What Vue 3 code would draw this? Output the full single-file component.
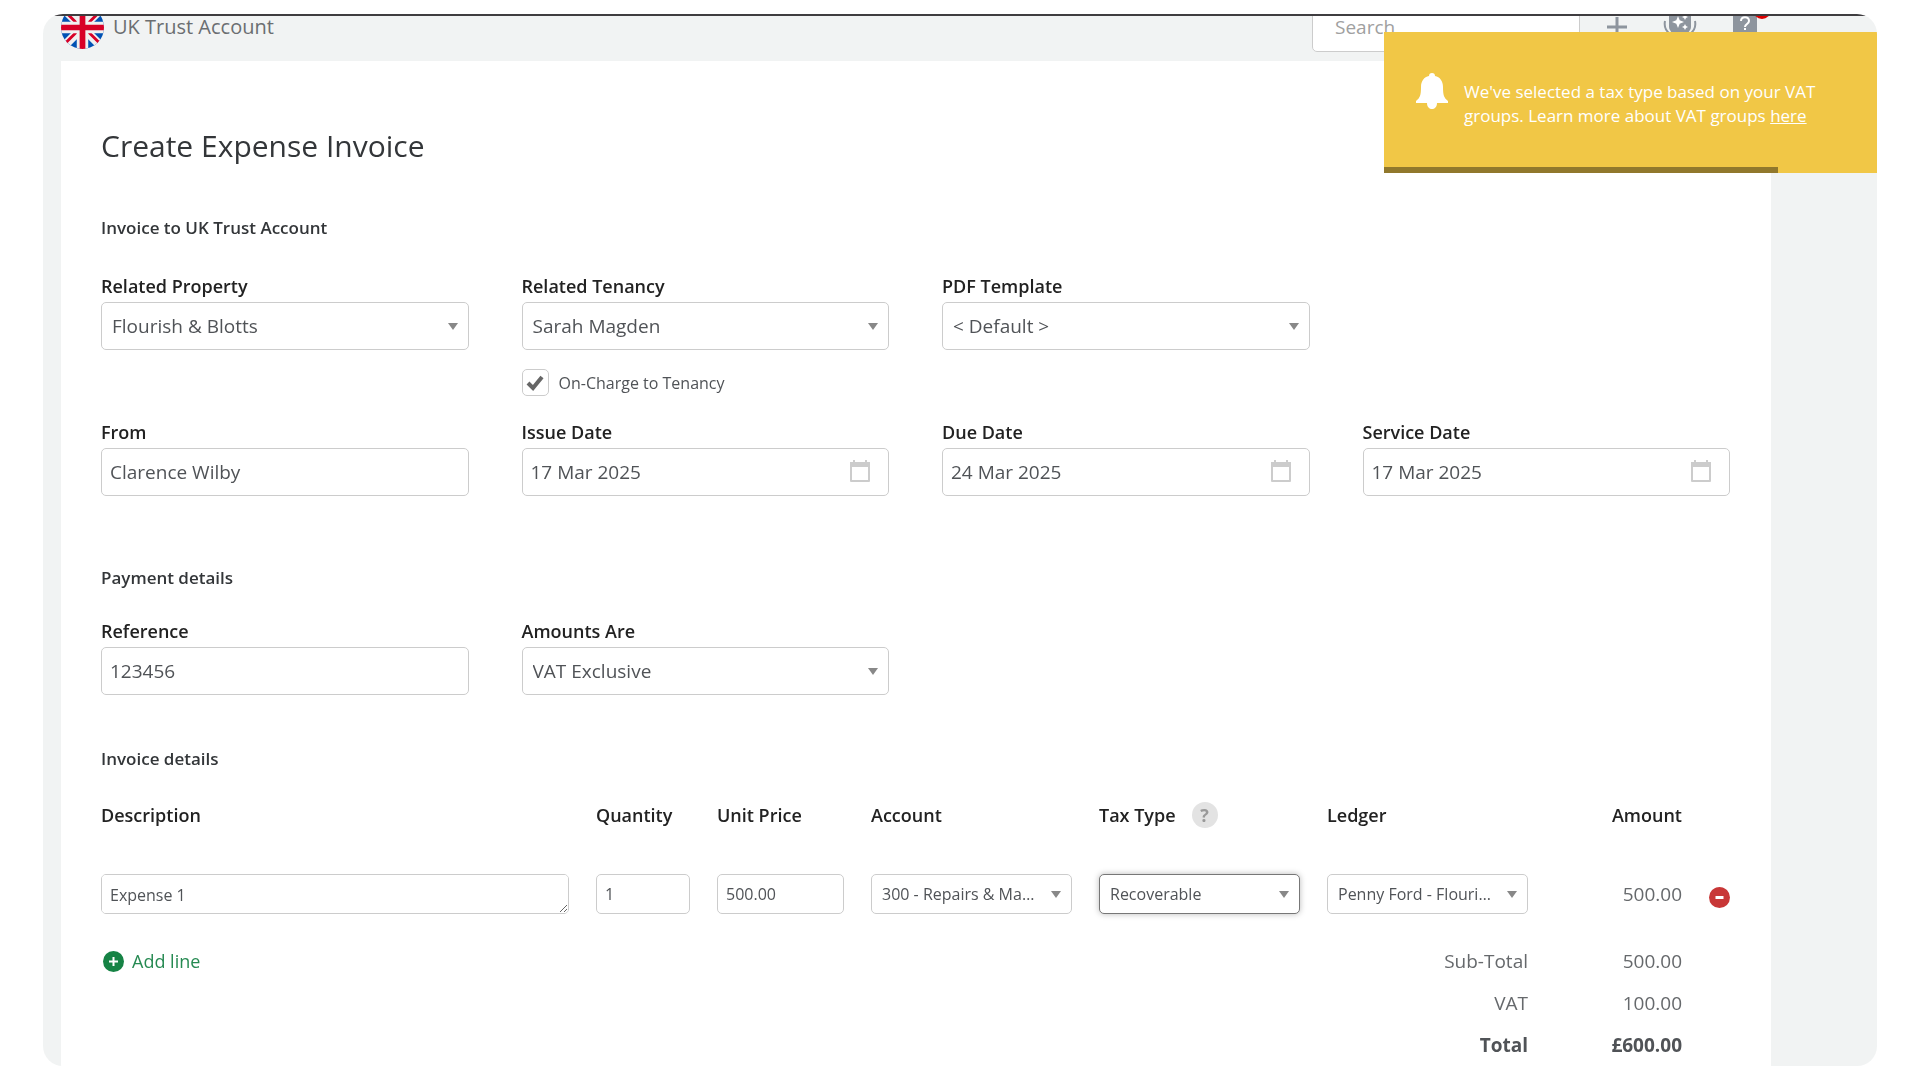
<template>
    <div class="page">
        <div class="frame">
            <header class="topbar">
                <div class="account">
                    <svg class="account__flag" viewBox="0 0 60 60" aria-hidden="true">
                        <clipPath id="flag-circle">
                            <circle cx="30" cy="30" r="30" />
                        </clipPath>
                        <g clip-path="url(#flag-circle)">
                            <rect width="60" height="60" fill="#0052b4" />
                            <path d="M0 0L60 60M60 0L0 60" stroke="#f0f0f0" stroke-width="12" />
                            <path d="M28 30L0 2M34 28L60 2M26 32L0 58M32 30L60 58" stroke="#d80027" stroke-width="4" />
                            <path d="M30 0V60M0 30H60" stroke="#f0f0f0" stroke-width="16" />
                            <path d="M30 0V60M0 30H60" stroke="#d80027" stroke-width="8" />
                        </g>
                    </svg>
                    <span class="account__name">{{ account }}</span>
                </div>
                <div class="tools">
                    <input class="tools__search" type="search" placeholder="Search" aria-label="Search">
                    <div class="tools__buttons">
                        <button class="tools__button" type="button" aria-label="Add">
                            <svg width="20" height="20" viewBox="0 0 20 20" fill="none" stroke="currentColor" stroke-width="3">
                                <path d="M10 0V20M0 10H20" />
                            </svg>
                        </button>
                        <button class="tools__button" type="button" aria-label="Assistant">
                            <svg width="34" height="32" viewBox="0 0 34 32" fill="none">
                                <rect x="6" width="22" height="22" rx="6" fill="currentColor" />
                                <path d="M2 10c-1 5 1 10 5 13M32 10c1 5-1 10-5 13" stroke="currentColor" stroke-width="2" />
                                <path d="M15 5l1.700 4.300L21 11l-4.300 1.700L15 17l-1.700-4.300L9 11l4.300-1.700zM22 3l1 2 2 1-2 1-1 2-1-2-2-1 2-1zM22 13l1 2 2 1-2 1-1 2-1-2-2-1 2-1z"
                                    fill="#fff" />
                            </svg>
                        </button>
                        <button class="tools__button" type="button" aria-label="Help">
                            <svg width="24" height="28" viewBox="0 0 24 28" fill="none">
                                <path d="M0 0h24v22h-8l-4 4-4-4H0z" fill="currentColor" />
                                <path d="M8 8c0-5 8-5 8 0 0 3-4 3-4 6M12 15v2" stroke="#fff" stroke-width="2" />
                            </svg>
                            <span class="tools__badge"></span>
                        </button>
                    </div>
                </div>
            </header>

            <main class="sheet">
                <h1 class="sheet__title">Create Expense Invoice</h1>

                <h2 class="sheet__heading">Invoice to {{ account }}</h2>
                <div class="fields">
                    <div v-for="field in relatedFields" :key="field.id" class="field">
                        <label class="field__label" :for="field.id">{{ field.label }}</label>
                        <select :id="field.id" class="control control--select">
                            <option>{{ field.value }}</option>
                        </select>
                        <label v-if="field.id === 'tenancy'" class="check">
                            <input v-model="onCharge" class="check__input" type="checkbox">
                            <span class="check__box">
                                <svg v-if="onCharge" width="18" height="16" viewBox="0 0 18 16" fill="none"
                                    stroke="currentColor" stroke-width="4">
                                    <path d="M2 8l5 5L16 2" />
                                </svg>
                            </span>
                            On-Charge to Tenancy
                        </label>
                    </div>
                </div>
                <div class="fields fields--dates">
                    <div class="field">
                        <label class="field__label" for="from">From</label>
                        <input id="from" class="control" type="text" value="Clarence Wilby">
                    </div>
                    <div v-for="field in dateFields" :key="field.id" class="field">
                        <label class="field__label" :for="field.id">{{ field.label }}</label>
                        <div class="date">
                            <input :id="field.id" class="control" type="text" :value="field.value">
                            <button class="date__button" type="button" :aria-label="`Choose ${field.label}`">
                                <svg width="22" height="22" viewBox="0 0 22 22" fill="none">
                                    <path d="M2 3h18v18H2z" stroke="currentColor" stroke-width="2" stroke-linejoin="round" />
                                    <path d="M1 2h20v5H1zM4 0h2v3H4zM16 0h2v3h-2z" fill="currentColor" />
                                </svg>
                            </button>
                        </div>
                    </div>
                </div>

                <h2 class="sheet__heading">Payment details</h2>
                <div class="fields fields--payment">
                    <div class="field">
                        <label class="field__label" for="reference">Reference</label>
                        <input id="reference" class="control" type="text" value="123456">
                    </div>
                    <div class="field">
                        <label class="field__label" for="amounts">Amounts Are</label>
                        <select id="amounts" class="control control--select">
                            <option>VAT Exclusive</option>
                        </select>
                    </div>
                </div>

                <h2 class="sheet__heading">Invoice details</h2>
                <table class="lines">
                    <colgroup>
                        <col>
                        <col class="lines__quantity">
                        <col class="lines__price">
                        <col class="lines__choice" span="3">
                        <col class="lines__amount">
                        <col class="lines__remove">
                    </colgroup>
                    <thead>
                        <tr>
                            <th>Description</th>
                            <th>Quantity</th>
                            <th>Unit Price</th>
                            <th>Account</th>
                            <th>
                                <span class="tax">
                                    Tax Type
                                    <button class="tax__help" type="button" aria-label="About tax types">?</button>
                                </span>
                            </th>
                            <th>Ledger</th>
                            <th class="number">Amount</th>
                            <td></td>
                        </tr>
                    </thead>
                    <tbody>
                        <tr v-for="line in lines" :key="line.description">
                            <td>
                                <textarea class="control control--small control--area" rows="1" aria-label="Description"
                                    :value="line.description"></textarea>
                            </td>
                            <td><input class="control control--small" type="text" aria-label="Quantity" :value="line.quantity"></td>
                            <td><input class="control control--small" type="text" aria-label="Unit Price" :value="line.price"></td>
                            <td>
                                <select class="control control--select control--small" aria-label="Account">
                                    <option>{{ line.account }}</option>
                                </select>
                            </td>
                            <td>
                                <select class="control control--select control--small control--active" aria-label="Tax Type">
                                    <option>{{ line.tax }}</option>
                                </select>
                            </td>
                            <td>
                                <select class="control control--select control--small" aria-label="Ledger">
                                    <option>{{ line.ledger }}</option>
                                </select>
                            </td>
                            <td class="number">{{ line.amount }}</td>
                            <td class="remove">
                                <button class="remove__button" type="button" aria-label="Remove line">
                                    <svg width="21" height="21" viewBox="0 0 21 21">
                                        <circle cx="10.500" cy="10.500" r="10.500" fill="#c83737" />
                                        <path d="M6.500 10.500h8" stroke="#fff" stroke-width="3" />
                                    </svg>
                                </button>
                            </td>
                        </tr>
                    </tbody>
                    <tfoot>
                        <tr v-for="(total, index) in totals" :key="total.label" :class="{ grand: total.grand }">
                            <td colspan="4">
                                <button v-if="index === 0" class="add" type="button">
                                    <svg width="21" height="21" viewBox="0 0 21 21">
                                        <circle cx="10.500" cy="10.500" r="10.500" fill="#168345" />
                                        <path d="M10.500 6v9M6 10.500h9" stroke="#fff" stroke-width="2" />
                                    </svg>
                                    Add line
                                </button>
                            </td>
                            <th class="number" colspan="2" scope="row">{{ total.label }}</th>
                            <td class="number">{{ total.value }}</td>
                            <td></td>
                        </tr>
                    </tfoot>
                </table>
            </main>

            <div class="toast" role="status">
                <svg class="toast__icon" width="32" height="36" viewBox="0 0 32 36" fill="currentColor" aria-hidden="true">
                    <path d="M16 0c2 0 3 1 3 3 5 1 8 5 8 11 0 8 1 11 5 14v2H0v-2c4-3 5-6 5-14C5 8 8 4 13 3c0-2 1-3 3-3zM11 30h10c0 8-10 8-10 0z" />
                </svg>
                <p class="toast__text">
                    We've selected a tax type based on your VAT groups. Learn more about VAT groups <a href="#">here</a>
                </p>
                <div class="toast__progress"></div>
            </div>
        </div>
    </div>
</template>

<script setup>
import { ref } from 'vue';

const account = 'UK Trust Account';
const onCharge = ref(true);

const relatedFields = [
    { id: 'property', label: 'Related Property', value: 'Flourish & Blotts' },
    { id: 'tenancy', label: 'Related Tenancy', value: 'Sarah Magden' },
    { id: 'template', label: 'PDF Template', value: '< Default >' },
];

const dateFields = [
    { id: 'issue-date', label: 'Issue Date', value: '17 Mar 2025' },
    { id: 'due-date', label: 'Due Date', value: '24 Mar 2025' },
    { id: 'service-date', label: 'Service Date', value: '17 Mar 2025' },
];

const lines = ref([
    {
        description: 'Expense 1',
        quantity: '1',
        price: '500.00',
        account: '300 - Repairs & Maintenance',
        tax: 'Recoverable',
        ledger: 'Penny Ford - Flourish & Blotts',
        amount: '500.00',
    },
]);

const totals = [
    { label: 'Sub-Total', value: '500.00' },
    { label: 'VAT', value: '100.00' },
    { label: 'Total', value: '£600.00', grand: true },
];
</script>

<style>
body {
    background: #fff;
}
</style>

<style scoped>
* {
    box-sizing: border-box;
}

.page {
    padding: 14px 43px;
    font-family: "Open Sans", "Noto Sans", sans-serif;
    font-size: 19px;
    line-height: 24px;
    color: #505357;
}

button {
    padding: 0;
    border: none;
    background: none;
    font: inherit;
    color: inherit;
    cursor: pointer;
}

.frame {
    position: relative;
    display: flex;
    flex-direction: column;
    min-height: calc(100vh - 28px);
    padding-top: 2px;
    overflow: hidden;
    border-radius: 20px;
    background: linear-gradient(#3f3d40 2px, #f1f3f3 2px);
}

/* The bar is partly scrolled under the top edge of the frame */
.topbar {
    display: flex;
    align-items: center;
    justify-content: space-between;
    height: 68px;
    margin-top: -23px;
    padding: 0 120px 0 18px;
    clip-path: inset(23px 0 0);
}

.account {
    display: flex;
    align-items: center;
    gap: 9px;
    font-size: 20px;
    color: #6b6e71;
}

.account__flag {
    width: 43px;
    height: 43px;
}

.tools {
    display: flex;
    align-items: center;
    gap: 27px;
    color: #8e959e;
}

.tools__search {
    width: 268px;
    height: 50px;
    padding: 0 22px;
    border: 1px solid #ccc;
    border-radius: 5px;
    background: #fff;
    font: inherit;
}

.tools__search::placeholder {
    color: #a0a0a0;
}

.tools__buttons {
    display: flex;
    align-items: center;
    gap: 36px;
}

.tools__button {
    position: relative;
    display: flex;
}

.tools__badge {
    position: absolute;
    top: -12px;
    right: -14px;
    width: 18px;
    height: 18px;
    border-radius: 50%;
    background: #d00;
}

.sheet {
    flex: 1;
    margin: 0 106px 0 18px;
    padding: 65px 41px 0 40px;
    background: #fff;
}

.sheet__title {
    margin: 0 0 50px;
    font-size: 30px;
    line-height: 40px;
    font-weight: 400;
    color: #333639;
}

.sheet__heading {
    margin: 0;
    font-size: 17px;
    line-height: 24px;
    font-weight: 600;
    color: #333639;
}

.fields {
    display: grid;
    grid-template-columns: repeat(4, 1fr);
    column-gap: 53px;
    padding-top: 34px;
}

.fields--dates {
    padding: 24px 0 70px;
}

.fields--payment {
    padding: 29px 0 52px;
}

.field__label {
    display: block;
    margin-bottom: 4px;
    font-size: 18px;
    line-height: 24px;
    font-weight: 600;
    color: #222;
}

.control {
    display: block;
    width: 100%;
    height: 48px;
    padding: 0 8px;
    border: 1px solid #ccc;
    border-radius: 5px;
    background: #fff;
    font: inherit;
    color: #505357;
}

.control--select {
    appearance: none;
    padding: 0 33px 0 10px;
    overflow: hidden;
    text-overflow: ellipsis;
    white-space: nowrap;
    background: #fff url("data:image/svg+xml,%3Csvg xmlns='http://www.w3.org/2000/svg' width='10' height='7'%3E%3Cpath d='M0 0h10L5 7z' fill='%23888'/%3E%3C/svg%3E") no-repeat right 10px center;
}

.control--small {
    height: 40px;
    font-size: 16px;
}

.control--area {
    padding: 8px;
    line-height: 24px;
    resize: vertical;
}

.control--active {
    border-color: #777;
    box-shadow: 0 0 6px #bbb;
}

.check {
    display: flex;
    align-items: center;
    gap: 10px;
    margin-top: 19px;
    font-size: 16px;
}

.check__input {
    position: absolute;
    opacity: 0;
}

.check__box {
    display: flex;
    align-items: center;
    justify-content: center;
    width: 27px;
    height: 27px;
    border: 1px solid #ccc;
    border-radius: 5px;
    color: #666;
}

.date {
    position: relative;
}

.date__button {
    position: absolute;
    top: 12px;
    right: 18px;
    display: flex;
    color: #ccc;
}

.lines {
    width: 100%;
    margin-top: 23px;
    border-collapse: collapse;
    table-layout: fixed;
}

.lines__quantity {
    width: 121px;
}

.lines__price,
.lines__amount {
    width: 154px;
}

.lines__choice {
    width: 228px;
}

.lines__remove {
    width: 21px;
}

.lines th,
.lines td {
    height: 42px;
    padding: 0 27px 0 0;
    text-align: left;
}

.lines td:last-child {
    padding-right: 0;
}

.lines thead th {
    font-size: 18px;
    font-weight: 600;
    color: #222;
}

.lines tbody td {
    padding-top: 38px;
    padding-bottom: 26px;
}

.lines tfoot th {
    font-weight: 400;
}

.lines .number {
    text-align: right;
    color: #66696c;
}

.lines thead .number {
    color: #222;
}

.lines .grand .number {
    font-weight: 700;
    color: #505357;
}

.tax {
    display: flex;
    align-items: center;
    gap: 16px;
}

.tax__help {
    width: 26px;
    height: 26px;
    border-radius: 50%;
    background: #e3e3e3;
    font-weight: 700;
    color: #999;
}

.lines .remove {
    padding-top: 44px;
}

.remove__button {
    display: flex;
}

.add {
    display: flex;
    align-items: center;
    gap: 8px;
    padding-left: 2px;
    font-size: 18px;
    color: #268a52;
}

.toast {
    position: absolute;
    top: 18px;
    right: 0;
    display: flex;
    align-items: flex-start;
    gap: 16px;
    width: 493px;
    height: 141px;
    padding: 41px 48px 0 32px;
    background: #f1c746;
    color: #fff;
}

.toast__icon {
    flex-shrink: 0;
}

.toast__text {
    margin: 0;
    padding-top: 7px;
    font-size: 17px;
    line-height: 24px;
}

.toast__text a {
    display: inline-block;
    color: inherit;
}

.toast__progress {
    position: absolute;
    bottom: 0;
    left: 0;
    width: 80%;
    height: 6px;
    background: #91782c;
}
</style>
